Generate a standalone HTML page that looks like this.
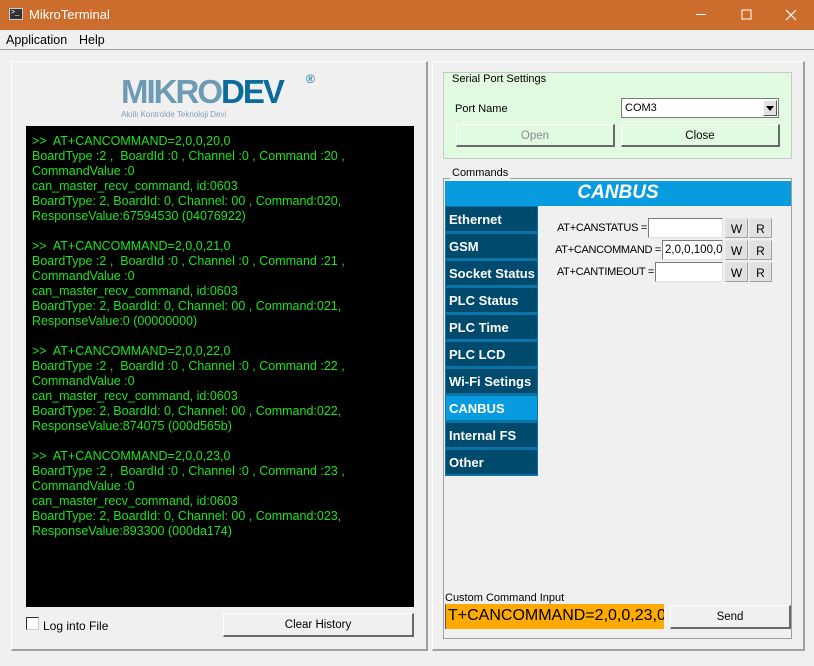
<!DOCTYPE html>
<html><head><meta charset="utf-8">
<style>
*{margin:0;padding:0;box-sizing:border-box}
body{width:814px;height:666px;background:#f0f0f0;font-family:"Liberation Sans",Arial,sans-serif;font-size:12px;color:#000;position:relative;overflow:hidden}
.a{position:absolute}
.btn{position:absolute;background:#e1e1e1;border:1px solid #adadad;border-right:2px solid #696969;border-bottom:2px solid #696969;text-align:center;font-size:11.5px}
.term{font-size:12.5px;color:#1ee31e;line-height:15px;white-space:pre}
.nav{position:absolute;left:445px;width:93px;height:27px;background:#004a6e;border:1px solid #0a73a8;border-bottom:2px solid #0a73a8;color:#fff;font-weight:bold;font-size:13px;padding:5px 0 0 3px}
.inp{position:absolute;background:#fff;border:1px solid #7a7a7a;border-right-color:#e0e0e0;border-bottom-color:#e0e0e0;height:20px;font-size:11.5px;padding:3px 0 0 2px;overflow:hidden;white-space:nowrap}
.sb{position:absolute;width:23px;height:20px;background:#e1e1e1;border:1px solid #e8e8e8;border-right:1px solid #a0a0a0;border-bottom:1px solid #a0a0a0;text-align:center;font-size:12px;padding-top:3px}
.lbl{position:absolute;font-size:11px;text-align:right;white-space:nowrap}
</style></head><body>
<div class="a" style="left:0;top:0;width:814px;height:30px;background:#cc6d2e"></div>
<div class="a" style="left:9px;top:8px;width:14px;height:12px;background:#333;border:1px solid #ccc"><div style="color:#fff;font-size:7px;line-height:8px;padding-left:1px">&gt;_</div></div>
<div class="a" style="left:29px;top:7px;color:#fff;font-size:13px">MikroTerminal</div>
<svg class="a" style="left:690px;top:8px" width="120" height="14"><line x1="6" y1="6.5" x2="16" y2="6.5" stroke="#fff"/><rect x="52" y="2" width="9" height="9" fill="none" stroke="#fff"/><path d="M96 2L106 12M106 2L96 12" stroke="#fff" stroke-width="1.2"/></svg>
<div class="a" style="left:6px;top:33px;font-size:12.5px">Application</div>
<div class="a" style="left:79px;top:33px;font-size:12.5px">Help</div>
<div class="a" style="left:0;top:49px;width:814px;height:1px;background:#a0a0a0"></div>

<div class="a" style="left:11px;top:61px;width:417px;height:590px;border:1px solid #fff;border-right:2px solid #a0a0a0;border-bottom:2px solid #a0a0a0"></div>
<div class="a" style="left:121px;top:75px;font-size:33px;font-weight:bold;letter-spacing:-2px;line-height:34px"><span style="color:#6c9bb3">MIKRO</span><span style="color:#0a6b9c">DEV</span></div>
<div class="a" style="left:306px;top:72px;font-size:12px;color:#0a6b9c">®</div>
<div class="a" style="left:121px;top:110px;font-size:8px;color:#7ea0b5">Akıllı Kontrolde Teknoloji Devi</div>
<div class="a term" style="left:26px;top:126px;width:388px;height:481px;background:#000;padding:8px 0 0 6px">&gt;&gt;  AT+CANCOMMAND=2,0,0,20,0
BoardType :2 ,  BoardId :0 , Channel :0 , Command :20 ,
CommandValue :0
can_master_recv_command, id:0603
BoardType: 2, BoardId: 0, Channel: 00 , Command:020,
ResponseValue:67594530 (04076922)

&gt;&gt;  AT+CANCOMMAND=2,0,0,21,0
BoardType :2 ,  BoardId :0 , Channel :0 , Command :21 ,
CommandValue :0
can_master_recv_command, id:0603
BoardType: 2, BoardId: 0, Channel: 00 , Command:021,
ResponseValue:0 (00000000)

&gt;&gt;  AT+CANCOMMAND=2,0,0,22,0
BoardType :2 ,  BoardId :0 , Channel :0 , Command :22 ,
CommandValue :0
can_master_recv_command, id:0603
BoardType: 2, BoardId: 0, Channel: 00 , Command:022,
ResponseValue:874075 (000d565b)

&gt;&gt;  AT+CANCOMMAND=2,0,0,23,0
BoardType :2 ,  BoardId :0 , Channel :0 , Command :23 ,
CommandValue :0
can_master_recv_command, id:0603
BoardType: 2, BoardId: 0, Channel: 00 , Command:023,
ResponseValue:893300 (000da174)</div>
<div class="a" style="left:26px;top:617px;width:13px;height:13px;background:#fff;border:1px solid #333;border-right-color:#ccc;border-bottom-color:#ccc"></div>
<div class="a" style="left:43px;top:619px;font-size:12px">Log into File</div>
<div class="btn" style="left:223px;top:613px;width:191px;height:24px;padding-top:5px;background:#f0f0f0;border-left-color:#fff;border-top-color:#fff">Clear History</div>

<div class="a" style="left:432px;top:61px;width:373px;height:590px;border:1px solid #fff;border-right:2px solid #a0a0a0;border-bottom:2px solid #a0a0a0"></div>
<div class="a" style="left:443px;top:72px;width:349px;height:87px;background:#e0fbe0;border:1px solid #c8c8c8"></div>
<div class="a" style="left:450px;top:73px;background:#e0fbe0;padding:0 2px;font-size:11px">Serial Port Settings</div>
<div class="a" style="left:455px;top:103px;font-size:11px">Port Name</div>
<div class="a" style="left:621px;top:98px;width:158px;height:20px;background:#fff;border:1px solid #7a7a7a;font-size:11px;padding:3px 0 0 3px">COM3</div>
<div class="a" style="left:763px;top:100px;width:14px;height:16px;background:#e1e1e1;border:1px solid #fff;border-right-color:#555;border-bottom-color:#555"><div style="margin:5px 0 0 2px;width:0;height:0;border-left:4px solid transparent;border-right:4px solid transparent;border-top:5px solid #000"></div></div>
<div class="btn" style="left:456px;top:124px;width:159px;height:23px;padding-top:5px;color:#8a8a8a;background:#e0fbe0;border-left-color:#fff;border-top-color:#fff">Open</div>
<div class="btn" style="left:621px;top:124px;width:159px;height:23px;padding-top:5px;background:#e0fbe0;border-left-color:#fff;border-top-color:#fff">Close</div>

<div class="a" style="left:443px;top:178px;width:349px;height:461px;border:1px solid #a0a0a0"></div>
<div class="a" style="left:450px;top:167px;background:#f0f0f0;padding:0 2px;font-size:11px">Commands</div>
<div class="a" style="left:445px;top:181px;width:346px;height:25px;background:#089bdf;color:#fff;font-weight:bold;font-style:italic;font-size:19px;text-align:center;padding-top:1px">CANBUS</div>
<div class="nav" style="top:206px">Ethernet</div>
<div class="nav" style="top:233px">GSM</div>
<div class="nav" style="top:260px">Socket Status</div>
<div class="nav" style="top:287px">PLC Status</div>
<div class="nav" style="top:314px">PLC Time</div>
<div class="nav" style="top:341px">PLC LCD</div>
<div class="nav" style="top:368px">Wi-Fi Setings</div>
<div class="nav" style="top:395px;background:#089bdf">CANBUS</div>
<div class="nav" style="top:422px">Internal FS</div>
<div class="nav" style="top:449px">Other</div>

<div class="lbl" style="left:540px;top:222px;width:107px;letter-spacing:-0.3px">AT+CANSTATUS =</div>
<div class="inp" style="left:648px;top:218px;width:75px"></div>
<div class="sb" style="left:725px;top:218px">W</div><div class="sb" style="left:749px;top:218px">R</div>
<div class="lbl" style="left:540px;top:244px;width:121px;letter-spacing:-0.3px">AT+CANCOMMAND =</div>
<div class="inp" style="left:662px;top:240px;width:61px">2,0,0,100,0</div>
<div class="sb" style="left:725px;top:240px">W</div><div class="sb" style="left:749px;top:240px">R</div>
<div class="lbl" style="left:540px;top:266px;width:114px;letter-spacing:-0.3px">AT+CANTIMEOUT =</div>
<div class="inp" style="left:655px;top:262px;width:68px"></div>
<div class="sb" style="left:725px;top:262px">W</div><div class="sb" style="left:749px;top:262px">R</div>

<div class="a" style="left:445px;top:592px;font-size:11px">Custom Command Input</div>
<div class="a" style="left:445px;top:604px;width:219px;height:25px;background:#ffaa00;font-size:16px;padding:3px 0 0 2px;overflow:hidden;white-space:nowrap;border-left:1px solid #555">T+CANCOMMAND=2,0,0,23,0</div>
<div class="btn" style="left:670px;top:605px;width:121px;height:24px;padding-top:5px;background:#f0f0f0;border-left-color:#fff;border-top-color:#fff">Send</div>
</body></html>
